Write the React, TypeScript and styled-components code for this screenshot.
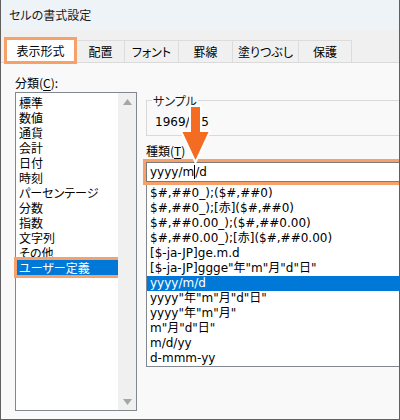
import * as React from 'react';
import styled, { createGlobalStyle } from 'styled-components';

const jp = `"Noto Sans CJK JP", sans-serif`;
const latin = `"DejaVu Sans", "Noto Sans CJK JP", sans-serif`;
const highlight = '#f6a169';

const GlobalStyle = createGlobalStyle`
    html, body {
        margin: 0;
        padding: 0;
        background: #ffffff;
    }
    body {
        font-family: ${jp};
        font-feature-settings: "palt";
        color: #000000;
    }
`;

const Window = styled.div`
    position: relative;
    width: 400px;
    height: 420px;
    box-sizing: border-box;
    border: 1px solid #5f5f5f;
    border-top: none;
    background: #f9f9f9;
    overflow: hidden;
    display: flex;
    flex-direction: column;
`;

const TitleBar = styled.div`
    height: 30px;
    flex-shrink: 0;
    padding-left: 8px;
    background: #eef3f8;
    font-size: 12px;
    line-height: 30px;
    color: #1a1a1a;
`;

const TabStrip = styled.div`
    height: 32px;
    flex-shrink: 0;
    display: flex;
    align-items: flex-end;
    padding-left: 3px;
    background: #f0f0f0;
    border-bottom: 1px solid #dadada;
`;

interface TabProps {
    w: number;
}

const Tab = styled.div<TabProps>`
    width: ${({ w }) => w}px;
    height: 22px;
    box-sizing: border-box;
    border-top: 1px solid #dcdcdc;
    border-right: 1px solid #dcdcdc;
    background: #f0f0f0;
    font-size: 12px;
    line-height: 21px;
    text-align: center;
`;

const ActiveTab = styled.div<TabProps>`
    position: relative;
    z-index: 1;
    width: ${({ w }) => w}px;
    height: 27px;
    margin-bottom: -2px;
    box-sizing: border-box;
    border: 3px solid ${highlight};
    background: #ffffff;
    font-size: 12px;
    line-height: 21px;
    text-align: center;
`;

const Body = styled.div`
    display: flex;
    padding-left: 14px;
`;

const LeftColumn = styled.div`
    width: 122px;
    flex-shrink: 0;
    padding-top: 12px;
`;

const FieldLabel = styled.div`
    font-size: 12px;
    line-height: 15px;
    & u {
        text-underline-offset: 2px;
    }
`;

const ListBox = styled.div`
    margin-top: 2px;
    height: 319px;
    box-sizing: border-box;
    border: 1px solid #828790;
    background: #ffffff;
    display: flex;
`;

const Items = styled.div`
    flex: 1;
    padding-top: 2px;
`;

interface ItemProps {
    selected?: boolean;
}

const CategoryItem = styled.div<ItemProps>`
    height: 15px;
    margin-left: 1px;
    padding-left: 2px;
    font-size: 12px;
    line-height: 15px;
    white-space: nowrap;
    background: ${({ selected }) => (selected ? '#0078d7' : 'transparent')};
    color: ${({ selected }) => (selected ? '#ffffff' : '#000000')};
    outline: ${({ selected }) => (selected ? `3px solid ${highlight}` : 'none')};
`;

const ScrollBar = styled.div`
    width: 18px;
    flex-shrink: 0;
    background: #f0f0f0;
    display: flex;
    flex-direction: column;
    justify-content: space-between;
    align-items: center;
    padding: 6px 0 5px;
`;

const RightColumn = styled.div`
    width: 290px;
    flex-shrink: 0;
    margin-left: 9px;
    padding-top: 30px;
`;

const SampleBox = styled.fieldset`
    margin: 0;
    padding: 7px 0 5px 8px;
    border: 1px solid #d9d9d9;
    font-size: 12px;
    & legend {
        margin-left: -3px;
        padding: 0 1px;
        line-height: 15px;
        color: #1a1a1a;
    }
`;

const SampleText = styled.div`
    font-family: ${latin};
    font-size: 12px;
    line-height: 15px;
`;

const TypeLabel = styled(FieldLabel)`
    margin-top: 7px;
`;

const TextBox = styled.div`
    position: relative;
    z-index: 1;
    margin-top: 4px;
    height: 20px;
    box-sizing: border-box;
    border: 1px solid #7a7a7a;
    outline: 3px solid ${highlight};
    background: #ffffff;
    padding-left: 3px;
    font-family: ${latin};
    font-size: 12px;
    line-height: 18px;
`;

const Caret = styled.span`
    display: inline-block;
    width: 0;
    height: 14px;
    border-left: 1px solid #000000;
    vertical-align: -3px;
`;

const FormatList = styled.div`
    height: 185px;
    box-sizing: border-box;
    border: 1px solid #828790;
    background: #ffffff;
    padding-top: 3px;
`;

const FormatItem = styled.div<ItemProps>`
    height: 15px;
    padding-left: 3px;
    font-family: ${latin};
    font-size: 12px;
    line-height: 15px;
    white-space: nowrap;
    background: ${({ selected }) => (selected ? '#0078d7' : 'transparent')};
    color: ${({ selected }) => (selected ? '#ffffff' : '#000000')};
`;

const Pointer = styled.svg`
    position: absolute;
    left: 179px;
    top: 104px;
    z-index: 2;
`;

const tabs = [
    { label: '配置', w: 48 },
    { label: 'フォント', w: 54 },
    { label: '罫線', w: 54 },
    { label: '塗りつぶし', w: 66 },
    { label: '保護', w: 53 },
];

const categories = [
    '標準',
    '数値',
    '通貨',
    '会計',
    '日付',
    '時刻',
    'パーセンテージ',
    '分数',
    '指数',
    '文字列',
    'その他',
    'ユーザー定義',
];

const formats = [
    '$#,##0_);($#,##0)',
    '$#,##0_);[赤]($#,##0)',
    '$#,##0.00_);($#,##0.00)',
    '$#,##0.00_);[赤]($#,##0.00)',
    '[$-ja-JP]ge.m.d',
    '[$-ja-JP]ggge"年"m"月"d"日"',
    'yyyy/m/d',
    'yyyy"年"m"月"d"日"',
    'yyyy"年"m"月"',
    'm"月"d"日"',
    'm/d/yy',
    'd-mmm-yy',
];

const ScrollArrow = ({ up }: { up?: boolean }) => (
    <svg width={9} height={6} viewBox="0 0 9 6">
        <polygon
            points={up ? '4.5,0 9,6 0,6' : '0,0 9,0 4.5,6'}
            fill="#a6a6a6"
        />
    </svg>
);

const App: React.FC = () => {
    return (
        <>
            <GlobalStyle />
            <Window>
                <TitleBar>セルの書式設定</TitleBar>
                <TabStrip>
                    <ActiveTab w={73}>表示形式</ActiveTab>
                    {tabs.map((t) => (
                        <Tab key={t.label} w={t.w}>
                            {t.label}
                        </Tab>
                    ))}
                </TabStrip>
                <Body>
                    <LeftColumn>
                        <FieldLabel>
                            分類(<u>C</u>):
                        </FieldLabel>
                        <ListBox>
                            <Items>
                                {categories.map((c) => (
                                    <CategoryItem
                                        key={c}
                                        selected={c === 'ユーザー定義'}
                                    >
                                        {c}
                                    </CategoryItem>
                                ))}
                            </Items>
                            <ScrollBar>
                                <ScrollArrow up />
                                <ScrollArrow />
                            </ScrollBar>
                        </ListBox>
                    </LeftColumn>
                    <RightColumn>
                        <SampleBox>
                            <legend>サンプル</legend>
                            <SampleText>1969/7/5</SampleText>
                        </SampleBox>
                        <TypeLabel>
                            種類(<u>T</u>)
                        </TypeLabel>
                        <TextBox>
                            yyyy/m
                            <Caret />
                            /d
                        </TextBox>
                        <FormatList>
                            {formats.map((f) => (
                                <FormatItem key={f} selected={f === 'yyyy/m/d'}>
                                    {f}
                                </FormatItem>
                            ))}
                        </FormatList>
                    </RightColumn>
                </Body>
                <Pointer width={32} height={60} viewBox="0 0 32 60">
                    <polygon
                        points="11,3 20,3 20,28 28.5,28 15.5,56 2.5,28 11,28"
                        fill="#f36c21"
                        stroke="#ffffff"
                        strokeWidth={4}
                        strokeLinejoin="miter"
                        paintOrder="stroke"
                    />
                </Pointer>
            </Window>
        </>
    );
};

export default App;
